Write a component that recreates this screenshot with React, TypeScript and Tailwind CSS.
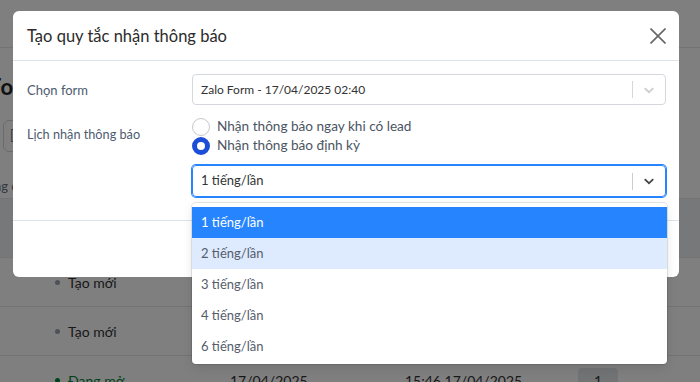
import React from "react";

const options = ["1 tiếng/lần", "2 tiếng/lần", "3 tiếng/lần", "4 tiếng/lần", "6 tiếng/lần"];

const rows = [
  { status: "Tạo mới", color: "text-[#333]", dot: "bg-gray-400", date: "", time: "" },
  { status: "Tạo mới", color: "text-[#333]", dot: "bg-gray-400", date: "", time: "" },
  { status: "Đang mở", color: "text-green-700", dot: "bg-green-700", date: "17/04/2025", time: "15:46 17/04/2025" },
];

function Chevron({ className }: { className?: string }) {
  return (
    <svg viewBox="0 0 20 20" className={className} fill="currentColor">
      <path d="M4.516 7.548c0.436-0.446 1.043-0.481 1.576 0l3.908 3.747 3.908-3.747c0.533-0.481 1.141-0.446 1.574 0 0.436 0.445 0.408 1.197 0 1.615-0.406 0.418-4.695 4.502-4.695 4.502-0.217 0.223-0.502 0.335-0.787 0.335s-0.57-0.112-0.789-0.335c0 0-4.287-4.084-4.695-4.502s-0.436-1.17 0-1.615z" />
    </svg>
  );
}

// page behind the modal, only a strip of it shows
function Page() {
  return (
    <div className="w-full h-full bg-white">
      <div className="h-[48px] border-b border-gray-200" />
      <div className="h-[72px] flex items-center pt-[4px]">
        <div className="w-[13px] overflow-hidden">
          <h2 className="-ml-[11px] text-[22px] font-bold text-[#222] whitespace-nowrap">Fo</h2>
        </div>
      </div>
      <div className="h-[34px] flex items-start pl-[3px]">
        <div className="w-[180px] h-[32px] border border-gray-300 rounded-md flex items-center px-[6px] text-[13px] text-gray-500">
          [
        </div>
      </div>
      <div className="h-[44px] flex items-end pb-[2px]">
        <div className="w-[13px] overflow-hidden">
          <span className="block -ml-[6px] text-[13px] text-gray-500 whitespace-nowrap">ng c</span>
        </div>
      </div>
      <div className="h-[60px] bg-[#eef0f3] border-y border-gray-200" />
      {rows.map((r, i) => (
        <div key={i} className="h-[49px] border-b border-gray-200 flex items-center text-[14px] text-[#333]">
          <div className={`w-[230px] pl-[55px] flex items-center gap-[8px] ${r.color}`}>
            <span className={`w-[5px] h-[5px] rounded-full ${r.dot}`} />
            {r.status}
          </div>
          <div className="w-[175px]">{r.date}</div>
          <div className="w-[173px]">{r.time}</div>
          <div className="w-[40px] h-[24px] rounded bg-gray-200 flex items-center justify-center">1</div>
        </div>
      ))}
    </div>
  );
}

export default function App() {
  return (
    <div
      className="relative w-[700px] h-[382px] overflow-hidden"
      style={{ fontFamily: "Lato, 'Noto Sans', sans-serif" }}
    >
      <Page />
      <div className="absolute inset-0 bg-black/50" />

      <div className="absolute left-[13px] top-[11px] w-[666px] h-[266px] bg-white rounded-md">
        <div className="h-[50px] pl-[14px] pr-[13px] flex items-center justify-between border-b border-[#dde3ea]">
          <h3 className="text-[16.5px] text-[#2b2b2b] pt-[1px]">Tạo quy tắc nhận thông báo</h3>
          <svg viewBox="0 0 16 16" className="w-[16px] h-[16px] text-[#666]" stroke="currentColor" strokeWidth="1.6" fill="none">
            <path d="M0.5 0.5 15.5 15.5M15.5 0.5 0.5 15.5" />
          </svg>
        </div>

        <div className="pt-[13px] pb-[23px] pr-[13px] border-b border-[#dde3ea] flex flex-col gap-[12px]">
          <div className="flex items-center">
            <div className="w-[179px] pl-[14px] pt-[2px] text-[13px] text-[#4d5b70]">Chọn form</div>
            <div className="flex-1 h-[31px] border border-[#d4d8de] rounded flex items-center">
              <span className="flex-1 pl-[8px] text-[12px] text-[#333]">Zalo Form - 17/04/2025 02:40</span>
              <span className="w-px h-[17px] bg-[#d6d6d6]" />
              <Chevron className="w-[16px] h-[16px] mx-[8px] text-[#cccccc]" />
            </div>
          </div>

          <div className="flex">
            <div className="w-[179px] pl-[14px] pt-[8px] text-[12.7px] text-[#4d5b70]">Lịch nhận thông báo</div>
            <div className="flex-1 flex flex-col">
              <label className="h-[19px] flex items-center gap-[7px] text-[13.6px] text-[#4b5563]">
                <span className="w-[18px] h-[18px] rounded-full border border-[#c8c8c8] bg-white" />
                Nhận thông báo ngay khi có lead
              </label>
              <label className="h-[19px] flex items-center gap-[7px] text-[13.6px] text-[#4b5563]">
                <span className="w-[18px] h-[18px] rounded-full border-[5px] border-[#1d4ed8] bg-white" />
                Nhận thông báo định kỳ
              </label>
              <div className="relative mt-[10px]">
                <div className="h-[32px] border border-[#2684ff] shadow-[0_0_0_1px_#2684ff] rounded flex items-center">
                  <span className="flex-1 pl-[8px] text-[13px] text-[#333]">1 tiếng/lần</span>
                  <span className="w-px h-[17px] bg-[#cccccc]" />
                  <Chevron className="w-[16px] h-[16px] mx-[8px] text-[#444]" />
                </div>
                <div className="absolute left-0 right-[-1px] top-[38px] bg-white rounded pt-[4px] pb-[2px] shadow-[0_0_0_1px_rgba(0,0,0,0.1),0_4px_11px_rgba(0,0,0,0.1)] z-10">
                  {options.map((o, i) => (
                    <div
                      key={o}
                      className={`h-[31px] flex items-center px-[9px] text-[13px] ${
                        i === 0
                          ? "bg-[#2684ff] text-white"
                          : i === 1
                          ? "bg-[#deebff] text-[#555d6b]"
                          : "text-[#555d6b]"
                      }`}
                    >
                      {o}
                    </div>
                  ))}
                </div>
              </div>
            </div>
          </div>
        </div>
      </div>
    </div>
  );
}
